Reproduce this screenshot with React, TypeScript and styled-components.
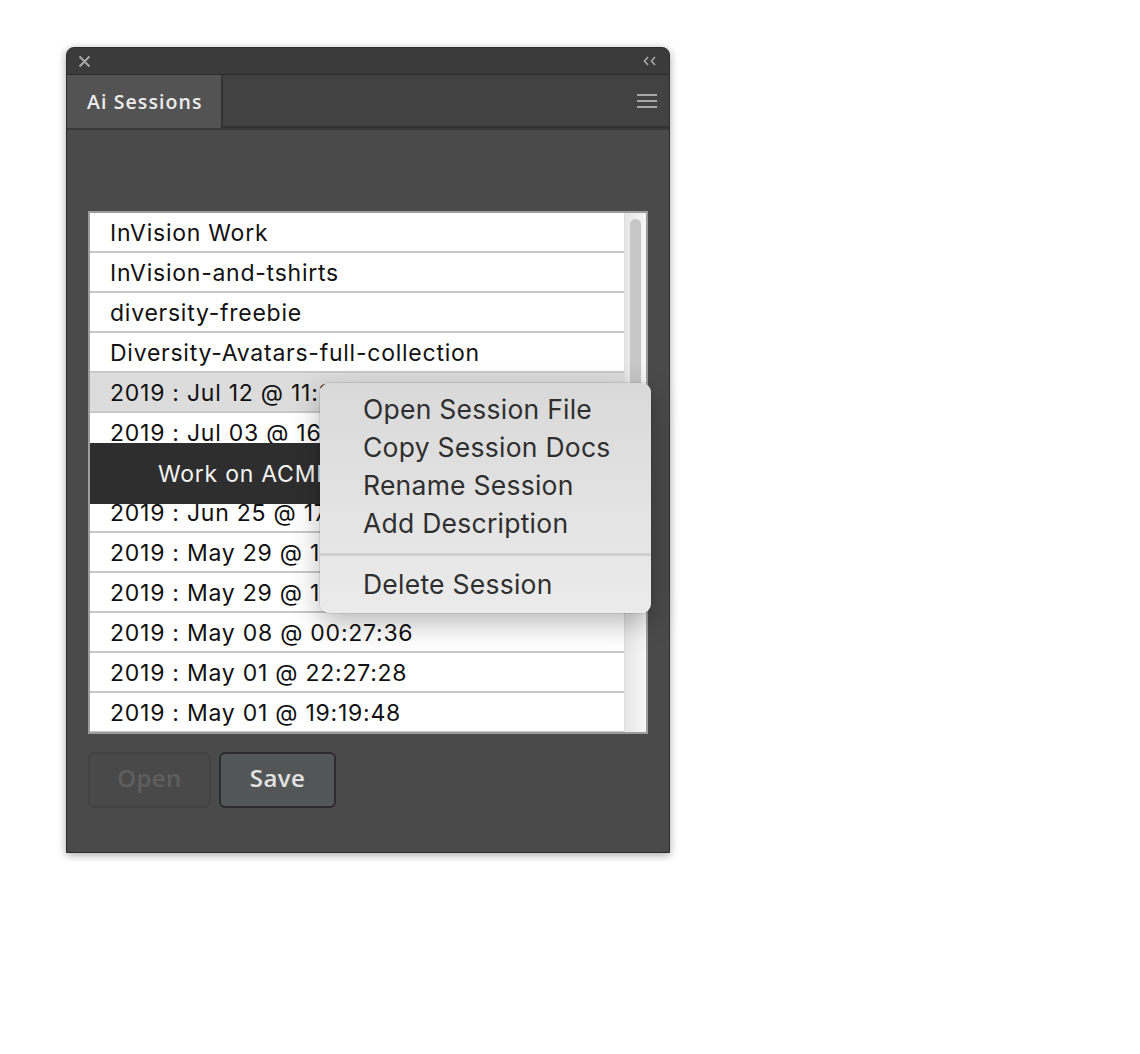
import styled, { createGlobalStyle } from "styled-components"

const GlobalStyle = createGlobalStyle`
  html, body {
    margin: 0;
    padding: 0;
    background: #ffffff;
  }
  * { box-sizing: border-box; }
`

const Page = styled.div`
  padding: 47px 0 0 66px;
  height: 1054px;`

const Panel = styled.div`
  width: 604px;
  height: 806px;
  background: #4a4a4a;
  border: 1px solid #2e2e2e;
  border-radius: 8px 8px 0 0;
  box-shadow: 0 2px 8px rgba(0, 0, 0, 0.35);
  display: flex;
  flex-direction: column;
  font-family: "Open Sans", "Liberation Sans", sans-serif;
  position: relative;`

const TopBar = styled.div`
  height: 27px;
  background: #3b3b3b;
  border-bottom: 1px solid #2c2c2c;
  border-radius: 7px 7px 0 0;
  display: flex;
  align-items: center;
  justify-content: space-between;
  padding: 0 12px 0 11px;`

const TabRow = styled.div`
  height: 55px;
  display: flex;
  background: #424242;
  border-bottom: 2px solid #383838;`

const Tab = styled.div`
  width: 154px;
  background: #535353;
  color: #ececec;
  font-size: 19.5px;
  font-weight: 600;
  letter-spacing: 1.1px;
  display: flex;
  align-items: center;
  padding-left: 20px;`

const TabFill = styled.div`
  flex: 1;
  border-left: 2px solid #333333;
  border-bottom: 2px solid #333333;
  display: flex;
  align-items: center;
  justify-content: flex-end;
  padding-right: 12px;`

const Body = styled.div`
  flex: 1;
  padding: 81px 0 0 21px;
  display: flex;
  flex-direction: column;
  gap: 18px;`

const ListBox = styled.div`
  width: 560px;
  height: 523px;
  border: 2px solid #9c9c9c;
  background: #ffffff;
  display: flex;
  overflow: hidden;
  position: relative;`

const Rows = styled.div`
  flex: 1;
  display: flex;
  flex-direction: column;`

const Row = styled.div<{ $selected?: boolean }>`
  height: 40px;
  flex: none;
  border-bottom: 2px solid #c8c8c8;
  background: ${p => (p.$selected ? "#dcdcdc" : "#ffffff")};
  color: #111111;
  font-family: "Inter", "Liberation Sans", sans-serif;
  font-size: 23px;
  letter-spacing: 0.75px;
  display: flex;
  align-items: center;
  padding: 1px 0 0 20px;
  white-space: nowrap;
  overflow: hidden;`

const ScrollTrack = styled.div`
  width: 22px;
  flex: none;
  background: linear-gradient(to right, #e6e6e6, #f7f7f7);
  border-left: 1px solid #dedede;
  padding: 6px 5px 0 5px;`

const ScrollThumb = styled.div`
  height: 230px;
  background: #c6c6c6;
  border-radius: 6px 6px 0 0;`

const Tooltip = styled.div`
  position: absolute;
  left: 0;
  top: 230px;
  width: 240px;
  height: 61px;
  background: #2e2e2e;
  color: #f4f4f4;
  font-family: "Inter", "Liberation Sans", sans-serif;
  font-size: 23px;
  letter-spacing: 0.75px;
  display: flex;
  align-items: center;
  padding-left: 68px;
  white-space: nowrap;
  overflow: hidden;`

const Menu = styled.div`
  position: absolute;
  left: 253px;
  top: 335px;
  width: 331px;
  height: 230px;
  border-radius: 9px;
  background: linear-gradient(to bottom, #d9d9d9, #ebebeb);
  box-shadow: 0 10px 28px rgba(0, 0, 0, 0.28), 0 0 0 1px rgba(0, 0, 0, 0.08);
  padding-top: 7px;
  display: flex;
  flex-direction: column;
  font-family: "Inter", "Liberation Sans", sans-serif;`

const MenuItem = styled.div`
  height: 38px;
  display: flex;
  align-items: center;
  padding-left: 43px;
  font-size: 26.5px;
  color: #2f2f2f;
  letter-spacing: 0.25px;
  white-space: nowrap;`

const MenuSeparator = styled.div`
  height: 3px;
  margin: 11px 0 9px;
  background: #d0d0d0;`

const ButtonRow = styled.div`
  display: flex;
  gap: 8px;`

const Button = styled.button<{ $disabled?: boolean }>`
  height: 56px;
  padding: 0 0 5px 0;
  border-radius: 6px;
  font-family: "Open Sans", "Liberation Sans", sans-serif;
  font-size: 24px;
  font-weight: 600;
  letter-spacing: 0.4px;
  display: flex;
  align-items: center;
  justify-content: center;
  border: 2px solid ${p => (p.$disabled ? "#434343" : "#2b2b2b")};
  background: ${p => (p.$disabled ? "#494949" : "#535656")};
  color: ${p => (p.$disabled ? "#5e5e5e" : "#e2e2e2")};`

const CloseIcon = () => (
  <svg width="13" height="13" viewBox="0 0 13 13">
    <path d="M1.5 1.5 L11.5 11.5 M11.5 1.5 L1.5 11.5" stroke="#a8a8a8" strokeWidth="2" />
  </svg>
)

const CollapseIcon = () => (
  <svg width="14" height="10" viewBox="0 0 14 10">
    <path d="M5 1 L1.5 5 L5 9 M12 1 L8.5 5 L12 9" stroke="#a8a8a8" strokeWidth="1.6" fill="none" />
  </svg>
)

const MenuIcon = () => (
  <svg width="20" height="14" viewBox="0 0 20 14">
    <path d="M0 1 H20 M0 7 H20 M0 13 H20" stroke="#a8a8a8" strokeWidth="2" />
  </svg>
)

const sessions = [
  "InVision Work",
  "InVision-and-tshirts",
  "diversity-freebie",
  "Diversity-Avatars-full-collection",
  "2019 : Jul 12 @ 11:30:12",
  "2019 : Jul 03 @ 16:42:05",
  "2019 : Jul 01 @ 09:12:44",
  "2019 : Jun 25 @ 17:08:31",
  "2019 : May 29 @ 18:22:10",
  "2019 : May 29 @ 12:05:57",
  "2019 : May 08 @ 00:27:36",
  "2019 : May 01 @ 22:27:28",
  "2019 : May 01 @ 19:19:48",
]

const menuItems = ["Open Session File", "Copy Session Docs", "Rename Session", "Add Description"]

export default function App() {
  return (
    <Page>
      <GlobalStyle />
      <Panel>
        <TopBar>
          <CloseIcon />
          <CollapseIcon />
        </TopBar>
        <TabRow>
          <Tab>Ai Sessions</Tab>
          <TabFill>
            <MenuIcon />
          </TabFill>
        </TabRow>
        <Body>
          <ListBox>
            <Rows>
              {sessions.map((s, i) => (
                <Row key={i} $selected={i === 4}>{s}</Row>
              ))}
            </Rows>
            <ScrollTrack>
              <ScrollThumb />
            </ScrollTrack>
            <Tooltip>Work on ACME</Tooltip>
          </ListBox>
          <ButtonRow>
            <Button $disabled style={{ width: 123 }}>Open</Button>
            <Button style={{ width: 117 }}>Save</Button>
          </ButtonRow>
        </Body>
        <Menu>
          {menuItems.map(m => (
            <MenuItem key={m}>{m}</MenuItem>
          ))}
          <MenuSeparator />
          <MenuItem>Delete Session</MenuItem>
        </Menu>
      </Panel>
    </Page>
  )
}
